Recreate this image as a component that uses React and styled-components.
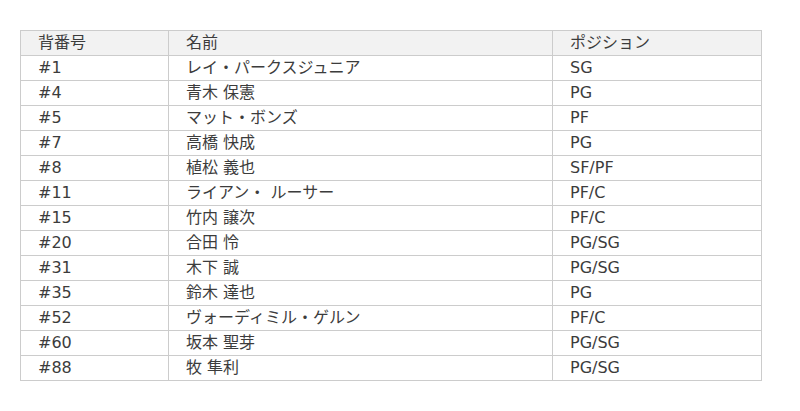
import React from "react";
import styled, { createGlobalStyle } from "styled-components";

const Global = createGlobalStyle`
  html, body { margin: 0; padding: 0; background: #fff; }
  body { font-family: "DejaVu Sans", "Noto Sans CJK JP", sans-serif; }
`;

const Page = styled.div`
  padding: 30px 20px;
`;

const Table = styled.table`
  border-collapse: collapse;
  table-layout: fixed;
  width: 741px;
  font-size: 16px;
  color: #3c3c3c;
`;

const Col = styled.col`
  width: ${(p) => p.$w}px;
`;

const Th = styled.th`
  background: #f2f2f2;
  font-weight: normal;
  text-align: left;
  border: 1px solid #ccc;
  height: 24px;
  padding: 0 0 0 17px;
  line-height: 24px;
`;

const Td = styled.td`
  border: 1px solid #ccc;
  height: 24px;
  padding: 0 0 0 17px;
  line-height: 24px;
  white-space: nowrap;
`;

const rows = [
  ["#1", "レイ・パークスジュニア", "SG"],
  ["#4", "青木 保憲", "PG"],
  ["#5", "マット・ボンズ", "PF"],
  ["#7", "高橋 快成", "PG"],
  ["#8", "植松 義也", "SF/PF"],
  ["#11", "ライアン・ ルーサー", "PF/C"],
  ["#15", "竹内 譲次", "PF/C"],
  ["#20", "合田 怜", "PG/SG"],
  ["#31", "木下 誠", "PG/SG"],
  ["#35", "鈴木 達也", "PG"],
  ["#52", "ヴォーディミル・ゲルン", "PF/C"],
  ["#60", "坂本 聖芽", "PG/SG"],
  ["#88", "牧 隼利", "PG/SG"],
];

export default function App() {
  return (
    <Page>
      <Global />
      <Table>
        <colgroup>
          <Col $w={148} />
          <Col $w={384} />
          <Col $w={209} />
        </colgroup>
        <thead>
          <tr>
            <Th>背番号</Th>
            <Th>名前</Th>
            <Th>ポジション</Th>
          </tr>
        </thead>
        <tbody>
          {rows.map((r) => (
            <tr key={r[0]}>
              <Td>{r[0]}</Td>
              <Td>{r[1]}</Td>
              <Td>{r[2]}</Td>
            </tr>
          ))}
        </tbody>
      </Table>
    </Page>
  );
}
